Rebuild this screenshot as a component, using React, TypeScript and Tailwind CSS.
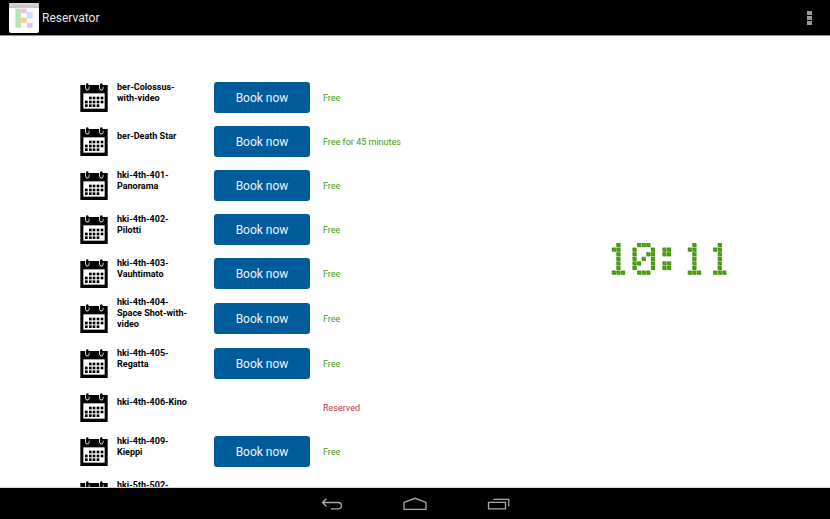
import React from "react";

type Room = { name: string; status: string; free: boolean };

const rooms: Room[] = [
  { name: "ber-Colossus-with-video", status: "Free", free: true },
  { name: "ber-Death Star", status: "Free for 45 minutes", free: true },
  { name: "hki-4th-401-Panorama", status: "Free", free: true },
  { name: "hki-4th-402-Pilotti", status: "Free", free: true },
  { name: "hki-4th-403-Vauhtimato", status: "Free", free: true },
  { name: "hki-4th-404-Space Shot-with-video", status: "Free", free: true },
  { name: "hki-4th-405-Regatta", status: "Free", free: true },
  { name: "hki-4th-406-Kino", status: "Reserved", free: false },
  { name: "hki-4th-409-Kieppi", status: "Free", free: true },
  { name: "hki-5th-502-\n\u00a0", status: "", free: false },
];

// Dot-matrix patterns, seven rows of five dots.
const dots: Record<string, string[]> = {
  "0": [".###.", "#...#", "#..##", "#.#.#", "##..#", "#...#", ".###."],
  "1": ["..#..", ".##..", "..#..", "..#..", "..#..", "..#..", ".###."],
  ":": [".....", ".##..", ".##..", ".....", ".##..", ".##..", "....."],
};

function Clock({ time }: { time: string }) {
  return (
    <time dateTime={time} aria-label={time}>
      <svg viewBox="0 0 380 96" className="h-8 w-[127px]" aria-hidden="true">
        {time.split("").map((ch, i) =>
          dots[ch].map((row, y) =>
            row.split("").map((d, x) =>
              d === "#" ? (
                <g key={`${i}-${x}-${y}`} transform={`translate(${i * 76 + x * 13.8} ${y * 13.8})`}>
                  <rect width="12.4" height="12.4" fill="#4a9a10" />
                  <path d="M6.2 0v12.4M0 6.2h12.4" stroke="#68ac3c" strokeWidth="1.4" />
                  <rect x="1" y="1" width="4.4" height="4.4" fill="#3c8a05" />
                  <rect x="7" y="7" width="4.4" height="4.4" fill="#3c8a05" />
                </g>
              ) : null,
            ),
          ),
        )}
      </svg>
    </time>
  );
}

const daySquares: [number, number][] = [
  [27, 41], [38, 41], [50, 41], [62, 41],
  [15, 53], [27, 53], [38, 53], [50, 53], [62, 53],
  [15, 64], [27, 64], [38, 64], [50, 64],
];

function CalendarIcon() {
  return (
    <svg viewBox="0 0 84 87" className="mt-[6px] mb-[7px] h-[29px] w-7" aria-hidden="true">
      <path d="M1 6h82v81H1z" fill="#000" />
      <path d="M10 31h64v46H10z" fill="#fff" />
      {[22, 64].map((x) => (
        <g key={x}>
          <path
            d={`M${x - 5} 5v11a5 5 0 0 0 10 0v-5`}
            fill="none"
            stroke="#fff"
            strokeWidth="3"
          />
          <path d={`M${x} 4v10`} stroke="#000" strokeWidth="7" strokeLinecap="round" />
        </g>
      ))}
      {daySquares.map(([x, y]) => (
        <rect key={`${x}-${y}`} x={x} y={y} width="8" height="8" fill="#000" />
      ))}
    </svg>
  );
}

function Logo() {
  return (
    <svg viewBox="0 0 90 90" className="h-[30px] w-[30px]" aria-hidden="true">
      <rect width="90" height="90" rx="6" fill="#fbfbfb" />
      <path d="M0 15V6a6 6 0 0 1 6-6h78a6 6 0 0 1 6 6v9z" fill="#c9c9c9" />
      <path d="M2 3h86" stroke="#e8e8e8" strokeWidth="3" />
      <path d="M19 17h17v57H19z" fill="#b9e6b0" />
      <path d="M37 17h16v13H37z" fill="#fdb5e3" />
      <path d="M54 27h17v20H54z" fill="#bfe3fa" />
      <path d="M37 44h16v16H37z" fill="#fccb9c" />
      <path d="M54 60h17v14H54z" fill="#dfc3fb" />
    </svg>
  );
}

export default function App() {
  return (
    <div className="flex h-screen flex-col overflow-hidden bg-white font-[Roboto,sans-serif]">
      <header className="flex h-9 shrink-0 items-center justify-between border-b border-[#33b5e5] bg-black pt-px pr-4 pl-[9px]">
        <div className="flex items-center gap-[3px]">
          <Logo />
          <h1 className="text-[12px] leading-4 text-[#e6e6e6]">Reservator</h1>
        </div>
        <button type="button" aria-label="More options" className="flex w-[9px] flex-col items-center gap-px">
          <span className="h-1 w-[5px] bg-[#999]" />
          <span className="h-1 w-[5px] bg-[#999]" />
          <span className="h-1 w-[5px] bg-[#999]" />
        </button>
      </header>

      <main className="grid min-h-0 flex-1 grid-cols-[8fr_5fr] grid-rows-[minmax(0,1fr)] overflow-hidden border-b border-[#d8d8d8]">
        <ul className="min-w-0 pt-10 pl-20">
          {rooms.map((room) => (
            <li key={room.name} className="grid min-h-11 grid-cols-[28px_76px_126px_1fr] items-center">
              <CalendarIcon />
              <h2 className="mt-px ml-[9px] w-[74px] pb-3 text-[9px] leading-[11px] font-bold whitespace-pre-line text-black">
                {room.name}
              </h2>
              <div className="col-start-3 pl-[30px]">
                {room.free && (
                  <button
                    type="button"
                    className="mt-[6px] mb-[7px] block h-[31px] w-full rounded-[3px] bg-[#005b9a] text-[12px] leading-4 text-[#eef5fa]"
                  >
                    Book now
                  </button>
                )}
              </div>
              <p className={room.free ? "pl-[13px] text-[9px] leading-3 text-[#459a0c]" : "pl-[13px] text-[9px] leading-3 text-[#c0393f]"}>
                {room.status}
              </p>
            </li>
          ))}
        </ul>
        <section className="flex min-w-0 items-center justify-center pb-[6px]">
          <Clock time="10:11" />
        </section>
      </main>

      <nav className="flex h-[31px] shrink-0 items-center justify-center gap-[60px] bg-black">
        <button type="button" aria-label="Back">
          <svg viewBox="0 0 24 14" className="h-[14px] w-6" fill="none" stroke="#aaa" strokeWidth="1.3" aria-hidden="true">
            <path d="M7.500 1.500 3.500 5.500 7.500 9.500M4 5.500h15a3.500 3.200 0 0 1 0 6.400h-7" />
          </svg>
        </button>
        <button type="button" aria-label="Home">
          <svg viewBox="0 0 24 14" className="h-[14px] w-6" fill="none" stroke="#aaa" strokeWidth="1.3" aria-hidden="true">
            <path d="M1 12.300V5.500L12 1.300l11 4.200v6.800z" />
          </svg>
        </button>
        <button type="button" aria-label="Recent apps">
          <svg viewBox="0 0 24 14" className="h-[14px] w-6" fill="none" stroke="#aaa" strokeWidth="1.3" aria-hidden="true">
            <path d="M1.500 5.300h17v6.500h-17zM6.500 2.300h15.300v7" />
          </svg>
        </button>
      </nav>
    </div>
  );
}
